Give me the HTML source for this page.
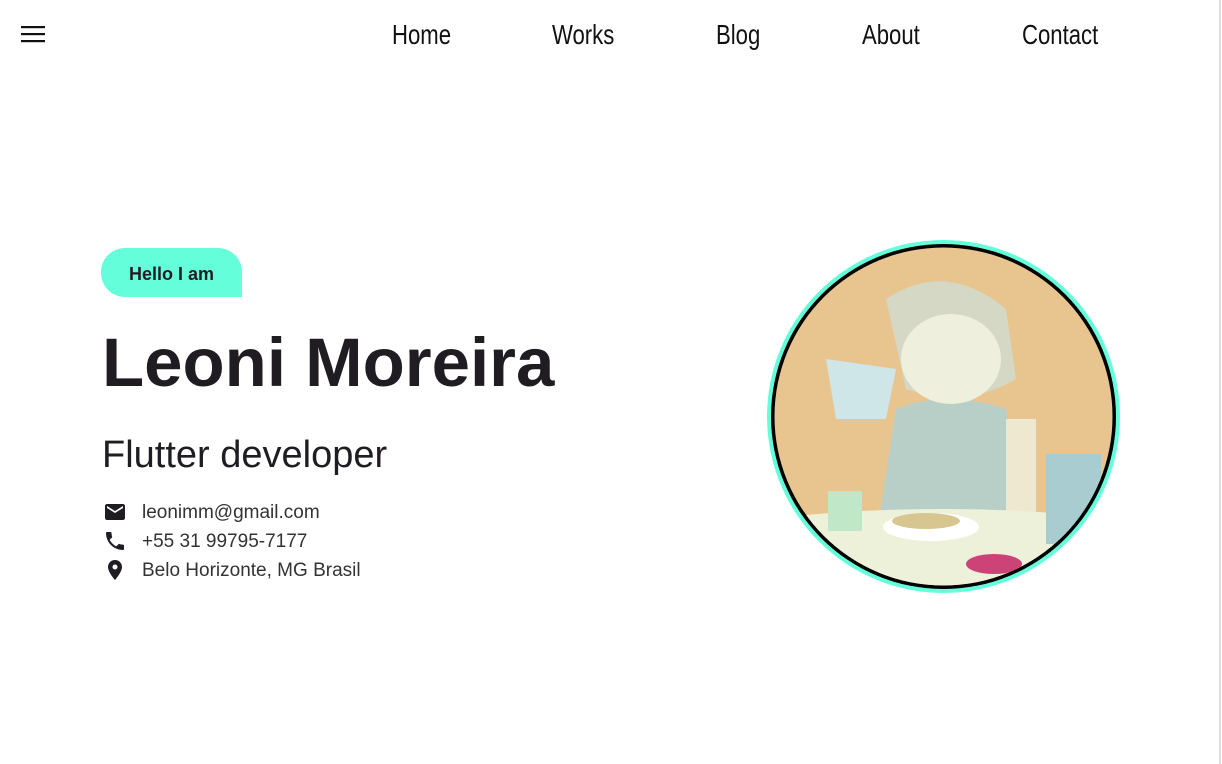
<!DOCTYPE html>
<html><head><meta charset="utf-8"><style>
body{margin:0;width:1222px;height:764px;background:#fff;position:relative;overflow:hidden;font-family:"Liberation Sans",sans-serif;color:#1f1d22}
.nav a{position:absolute;top:19px;font-family:"Liberation Sans Narrow","Liberation Sans",sans-serif;font-stretch:condensed;font-size:28px;color:#111;text-decoration:none;transform:scaleX(0.79);transform-origin:left}
.badge{position:absolute;left:101px;top:248px;width:141px;height:49px;background:#64ffda;border-radius:24px 24px 0 24px;font-weight:bold;font-size:18px;line-height:52px;text-align:center;color:#1f1d22}
h1{position:absolute;left:102px;top:323px;margin:0;font-size:69px;font-weight:bold;letter-spacing:0}
.sub{position:absolute;left:102px;top:434px;font-size:38px}
.row{position:absolute;left:102px;font-size:19px;color:#333}
.row svg{position:absolute;left:0;top:0}
.row span{position:absolute;left:40px;top:2px;white-space:nowrap}
</style></head><body>
<svg style="position:absolute;left:21px;top:25px" width="25" height="18"><rect y="1" width="24" height="2.2" fill="#111"/><rect y="8" width="24" height="2.2" fill="#111"/><rect y="15" width="24" height="2.2" fill="#111"/></svg>
<div class="nav"><a style="left:392px">Home</a><a style="left:552px">Works</a><a style="left:716px">Blog</a><a style="left:862px">About</a><a style="left:1022px">Contact</a></div>
<div style="position:absolute;left:1219px;top:0;width:2px;height:764px;background:#ddd"></div>
<div class="badge">Hello I am</div>
<h1>Leoni Moreira</h1>
<div class="sub">Flutter developer</div>
<div class="row" style="top:500px"><svg width="26" height="24" viewBox="0 0 24 24"><path d="M20 4H4c-1.1 0-2 .9-2 2v12c0 1.1.9 2 2 2h16c1.1 0 2-.9 2-2V6c0-1.1-.9-2-2-2zm0 4l-8 5-8-5V6l8 5 8-5v2z" fill="#1f1d22"/></svg><span>leonimm@gmail.com</span></div>
<div class="row" style="top:529px"><svg width="26" height="24" viewBox="0 0 24 24"><path d="M6.6 10.8c1.4 2.8 3.8 5.1 6.6 6.6l2.2-2.2c.3-.3.7-.4 1-.2 1.1.4 2.3.6 3.6.6.6 0 1 .4 1 1V20c0 .6-.4 1-1 1C10.6 21 3 13.4 3 4c0-.6.4-1 1-1h3.5c.6 0 1 .4 1 1 0 1.3.2 2.5.6 3.6.1.3 0 .7-.2 1L6.6 10.8z" fill="#1f1d22"/></svg><span>+55 31 99795-7177</span></div>
<div class="row" style="top:558px"><svg width="26" height="24" viewBox="0 0 24 24"><path d="M12 2C8.1 2 5 5.1 5 9c0 5.2 7 13 7 13s7-7.8 7-13c0-3.9-3.1-7-7-7zm0 9.5a2.5 2.5 0 1 1 0-5 2.5 2.5 0 0 1 0 5z" fill="#1f1d22"/></svg><span>Belo Horizonte, MG Brasil</span></div>
<svg style="position:absolute;left:766px;top:239px" width="355" height="355" viewBox="0 0 355 355">
<defs><clipPath id="c"><circle cx="177.5" cy="177.5" r="169"/></clipPath></defs>
<circle cx="177.5" cy="177.5" r="176.5" fill="#64ffda"/>
<circle cx="177.5" cy="177.5" r="172.5" fill="#000"/>
<g clip-path="url(#c)">
<rect width="355" height="355" fill="#e8c48f"/>
<path d="M130 170 Q180 150 240 170 L260 300 L110 300 Z" fill="#b8cfc8"/>
<rect x="240" y="180" width="30" height="100" fill="#efe8d0"/>
<path d="M120 60 Q180 20 240 70 L250 140 Q200 170 140 150 Z" fill="#d4d8c4"/>
<ellipse cx="185" cy="120" rx="50" ry="45" fill="#eeefdc"/>
<path d="M60 120 L130 130 L120 180 L70 180 Z" fill="#cfe6e8"/>
<path d="M0 280 Q176 260 355 280 L355 355 L0 355 Z" fill="#eef1da"/>
<ellipse cx="165" cy="288" rx="48" ry="14" fill="#fff"/>
<ellipse cx="160" cy="282" rx="34" ry="8" fill="#d7c690"/>
<rect x="62" y="252" width="34" height="40" fill="#bfe7c8"/>
<rect x="280" y="215" width="55" height="90" fill="#a9ccd0"/>
<ellipse cx="228" cy="325" rx="28" ry="10" fill="#c47"/>
</g>
</svg>
</body></html>
